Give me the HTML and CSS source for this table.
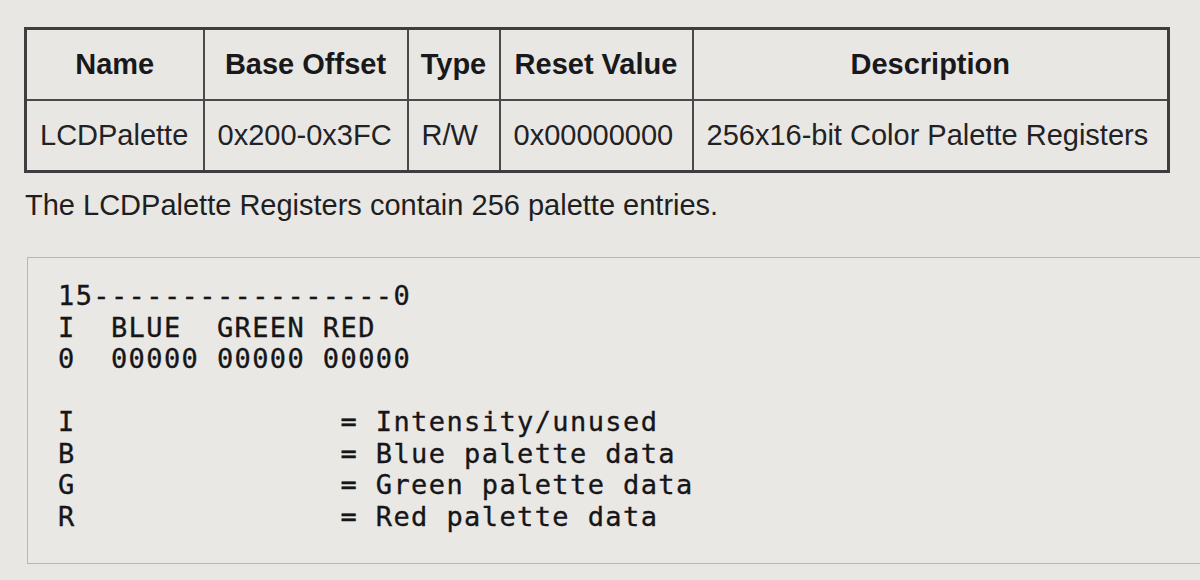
FILE: index.html
```html
<!DOCTYPE html>
<html>
<head>
<meta charset="utf-8">
<link rel="stylesheet" href="styles.css">
</head>
<body>
<div class="page">
  <table class="regs">
    <colgroup>
      <col class="c-name">
      <col class="c-offset">
      <col class="c-type">
      <col class="c-reset">
      <col class="c-desc">
    </colgroup>
    <thead>
      <tr>
        <th>Name</th>
        <th>Base Offset</th>
        <th>Type</th>
        <th>Reset Value</th>
        <th>Description</th>
      </tr>
    </thead>
    <tbody>
      <tr>
        <td>LCDPalette</td>
        <td>0x200-0x3FC</td>
        <td>R/W</td>
        <td>0x00000000</td>
        <td>256x16-bit Color Palette Registers</td>
      </tr>
    </tbody>
  </table>
  <p class="note">The LCDPalette Registers contain 256 palette entries.</p>
  <pre class="code">15-----------------0
I  BLUE  GREEN RED
0  00000 00000 00000

I               = Intensity/unused
B               = Blue palette data
G               = Green palette data
R               = Red palette data</pre>
</div>
</body>
</html>
```

FILE: styles.css
```css
html, body {
  margin: 0;
  padding: 0;
  background: #e9e7e4;
}

body {
  font-family: "Liberation Sans", Arial, sans-serif;
  color: #1c1c1e;
  overflow: hidden;
}

.page {
  padding: 27px 0 0 24px;
}

.regs {
  border-collapse: collapse;
  table-layout: fixed;
  width: 1143px;
  border: 3px solid #3e3e40;
  font-size: 29px;
}

.c-name { width: 178px; }
.c-offset { width: 204px; }
.c-type { width: 92px; }
.c-reset { width: 193px; }
.c-desc { width: 476px; }

.regs th,
.regs td {
  border: 2px solid #4a4a4c;
  padding: 18px 0 18px 13px;
  line-height: 33px;
  white-space: nowrap;
  overflow: hidden;
}

.regs th {
  font-weight: bold;
  text-align: center;
  padding-left: 0;
  color: #19191b;
}

.regs td {
  text-align: left;
  color: #222224;
}

.note {
  margin: 16px 0 0 1px;
  font-size: 29px;
  line-height: 33px;
  color: #1f1f21;
}

.code {
  margin: 35px 0 0 3px;
  width: 1200px;
  border: 1px solid #b9b7b4;
  background: #eae8e5;
  padding: 22px 0 31px 30px;
  font-family: "DejaVu Sans Mono", monospace;
  font-size: 27px;
  letter-spacing: 1.4px;
  line-height: 31.5px;
  color: #161618;
  -webkit-text-stroke: 0.35px #161618;
  white-space: pre;
}
```
